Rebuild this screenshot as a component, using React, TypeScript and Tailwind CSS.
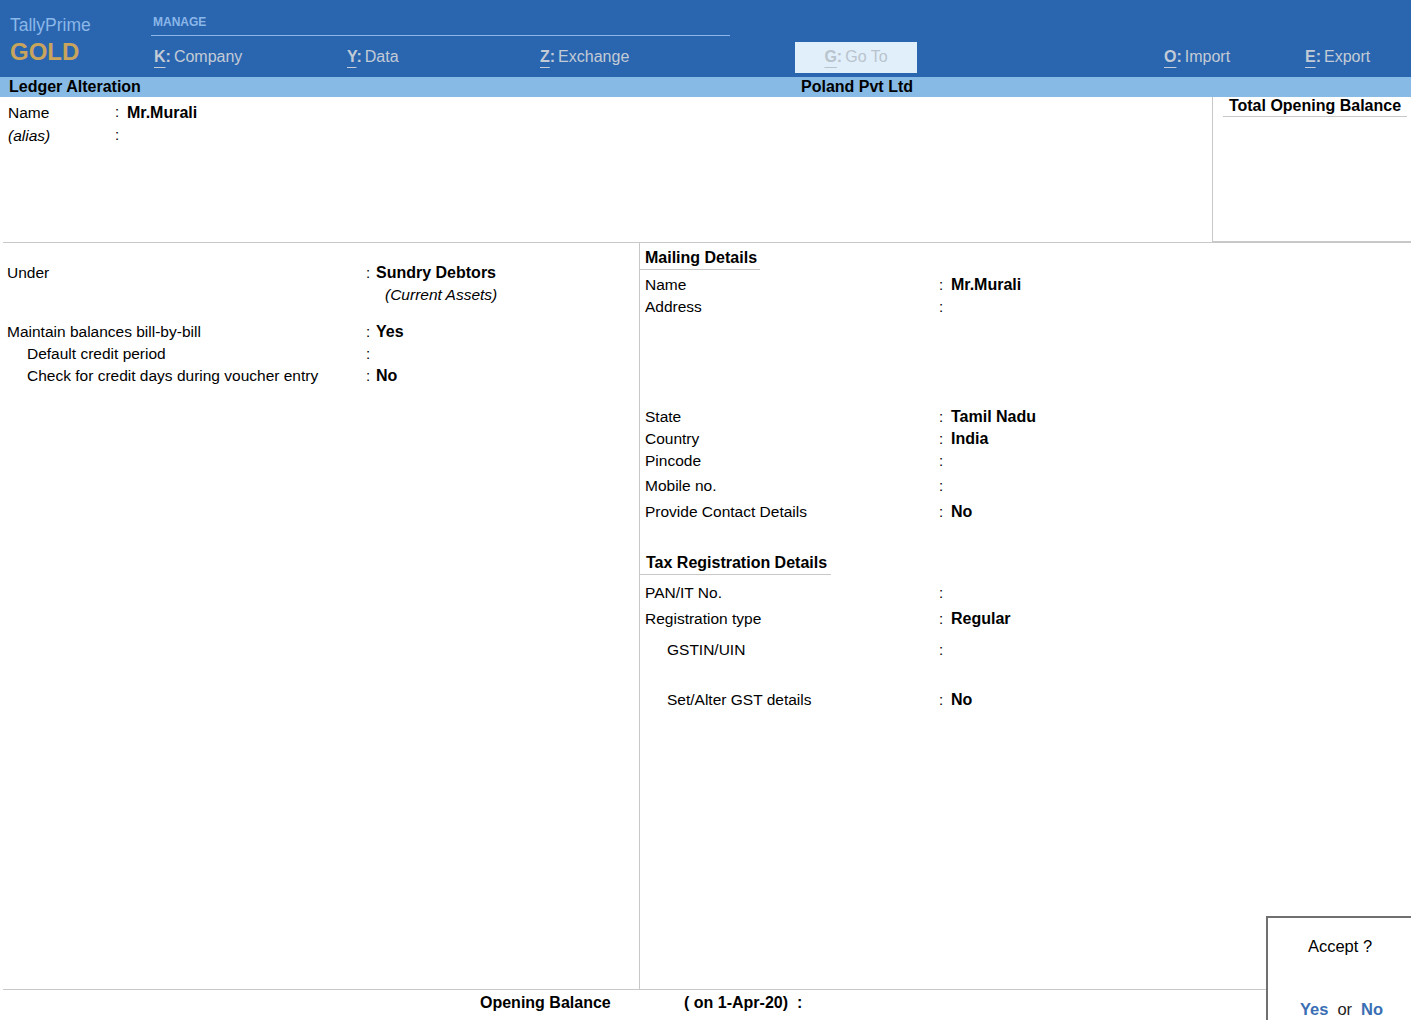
import React from "react";

const MenuItem = ({ k, label, w }: { k: string; label: string; w: string }) => (
  <div className={`${w} flex items-center text-[16px] text-[#c3cbd6]`}>
    <span className="font-bold">
      <span className="underline underline-offset-[5px] decoration-1">{k}</span>:
    </span>
    <span className="ml-[3px]">{label}</span>
  </div>
);

const Row = ({
  label,
  value,
  labelW,
  colonW = "w-[10px]",
  indent = "",
  italic = false,
  cls = "",
}: {
  label: string;
  value?: string;
  labelW: string;
  colonW?: string;
  indent?: string;
  italic?: boolean;
  cls?: string;
}) => (
  <div className={`flex h-[22px] items-center ${cls}`}>
    <div className={`${labelW} text-[15.5px] ${indent} ${italic ? "italic" : ""}`}>{label}</div>
    <div className={`${colonW} text-[15px]`}>:</div>
    <div className="text-[16px] font-bold">{value}</div>
  </div>
);

export default function App() {
  return (
    <div
      className="relative w-[1411px] h-[1020px] overflow-hidden bg-white text-black"
      style={{ fontFamily: '"Liberation Sans", Arial, sans-serif' }}
    >
      {/* Header */}
      <div className="h-[77px] bg-[#2a66b0] flex">
        <div className="w-[151px] pl-[10px] pt-[14px]">
          <div className="text-[17.5px] leading-[22px] text-[#8bb7e8]">TallyPrime</div>
          <div className="text-[24px] leading-[28px] mt-[2px] font-bold text-[#c9a45c]">GOLD</div>
        </div>
        <div className="flex-1">
          <div className="w-[579px] h-[36px] border-b border-[#8bb7e8] pt-[15px] pl-[2px] text-[12px] leading-[14px] font-bold text-[#8bb7e8]">
            MANAGE
          </div>
          <div className="flex items-center h-[36px] pl-[3px] mt-[3px]">
            <MenuItem k="K" label="Company" w="w-[193px]" />
            <MenuItem k="Y" label="Data" w="w-[193px]" />
            <MenuItem k="Z" label="Exchange" w="w-[255px]" />
            <div className="w-[122px] h-[31px] bg-[#e1effb] flex items-center justify-center text-[16px] text-[#b9c3cc]">
              <span className="font-bold">
                <span className="underline underline-offset-[5px] decoration-1">G</span>:
              </span>
              <span className="ml-[3px]">Go To</span>
            </div>
            <div className="w-[247px]" />
            <MenuItem k="O" label="Import" w="w-[141px]" />
            <MenuItem k="E" label="Export" w="w-[100px]" />
          </div>
        </div>
      </div>

      {/* Sub bar */}
      <div className="h-[20px] bg-[#87bbe5] flex items-center text-[16px] leading-[18px] font-bold">
        <div className="w-[801px] pl-[9px]">Ledger Alteration</div>
        <div>Poland Pvt Ltd</div>
      </div>

      {/* Top section */}
      <div className="h-[146px] flex ml-[3px]">
        <div className="flex-1 border-b border-[#c8c8c8] pt-[4px] pl-[5px]">
          <div className="flex h-[23px] items-center">
            <div className="w-[107px] text-[15.5px]">Name</div>
            <div className="w-[12px] text-[15px]">:</div>
            <div className="text-[16px] font-bold">Mr.Murali</div>
          </div>
          <div className="flex h-[23px] items-center">
            <div className="w-[107px] text-[15.5px] italic">(alias)</div>
            <div className="w-[12px] text-[15px]">:</div>
          </div>
        </div>
        <div className="w-[199px] border-l border-b-2 border-[#c8c8c8] pl-[10px] pr-[4px]">
          <div className="h-[20px] border-b border-[#c8c8c8] text-center text-[16px] font-bold leading-[18px]">
            Total Opening Balance
          </div>
        </div>
      </div>

      {/* Main */}
      <div className="h-[747px] flex ml-[3px] border-b border-[#c8c8c8]">
        <div className="w-[637px] border-r border-[#c8c8c8] pl-[4px]">
          <div className="mt-[19px]">
            <Row label="Under" value="Sundry Debtors" labelW="w-[359px]" />
            <div className="h-[22px] flex items-center pl-[378px] text-[15.5px] italic">(Current Assets)</div>
          </div>
          <Row label="Maintain balances bill-by-bill" value="Yes" labelW="w-[359px]" cls="mt-[15px]" />
          <Row label="Default credit period" labelW="w-[359px]" indent="pl-[20px]" cls="h-[21px]" />
          <Row label="Check for credit days during voucher entry" value="No" labelW="w-[359px]" indent="pl-[20px]" cls="h-[21px]" />
        </div>
        <div className="flex-1">
          <div className="mt-[6px] w-fit pl-[5px] pr-[3px] pb-[2px] border-b border-[#c8c8c8] text-[16px] font-bold leading-[18px]">
            Mailing Details
          </div>
          <div className="pl-[5px]">
            <Row label="Name" value="Mr.Murali" labelW="w-[294px]" colonW="w-[12px]" cls="mt-[4px]" />
            <Row label="Address" labelW="w-[294px]" colonW="w-[12px]" />
            <Row label="State" value="Tamil Nadu" labelW="w-[294px]" colonW="w-[12px]" cls="mt-[88px]" />
            <Row label="Country" value="India" labelW="w-[294px]" colonW="w-[12px]" />
            <Row label="Pincode" labelW="w-[294px]" colonW="w-[12px]" />
            <Row label="Mobile no." labelW="w-[294px]" colonW="w-[12px]" cls="mt-[3px]" />
            <Row label="Provide Contact Details" value="No" labelW="w-[294px]" colonW="w-[12px]" cls="mt-[4px]" />
          </div>
          <div className="mt-[31px] w-fit pl-[6px] pr-[4px] pb-[2px] border-b border-[#c8c8c8] text-[16px] font-bold leading-[18px]">
            Tax Registration Details
          </div>
          <div className="pl-[5px]">
            <Row label="PAN/IT No." labelW="w-[294px]" colonW="w-[12px]" cls="mt-[7px]" />
            <Row label="Registration type" value="Regular" labelW="w-[294px]" colonW="w-[12px]" cls="mt-[4px]" />
            <Row label="GSTIN/UIN" labelW="w-[294px]" colonW="w-[12px]" indent="pl-[22px]" cls="mt-[9px]" />
            <Row label="Set/Alter GST details" value="No" labelW="w-[294px]" colonW="w-[12px]" indent="pl-[22px]" cls="mt-[28px]" />
          </div>
        </div>
      </div>

      {/* Bottom row */}
      <div className="h-[26px] flex items-center text-[16px] font-bold">
        <div className="w-[480px]" />
        <div className="w-[204px]">Opening Balance</div>
        <div>( on 1-Apr-20)&nbsp;&nbsp;:</div>
      </div>

      {/* Accept box */}
      <div className="absolute left-[1266px] top-[916px] w-[150px] h-[110px] bg-white border-2 border-[#707070] flex flex-col items-center">
        <div className="mt-[18px] text-[16.5px] leading-[20px] pr-[2px]">Accept ?</div>
        <div className="mt-[43px] text-[16.5px] leading-[20px] pl-[1px]">
          <span className="font-bold text-[#3a6eb4]">Yes</span>
          <span className="mx-[9px] text-[#222]">or</span>
          <span className="font-bold text-[#3a6eb4]">No</span>
        </div>
      </div>
    </div>
  );
}
